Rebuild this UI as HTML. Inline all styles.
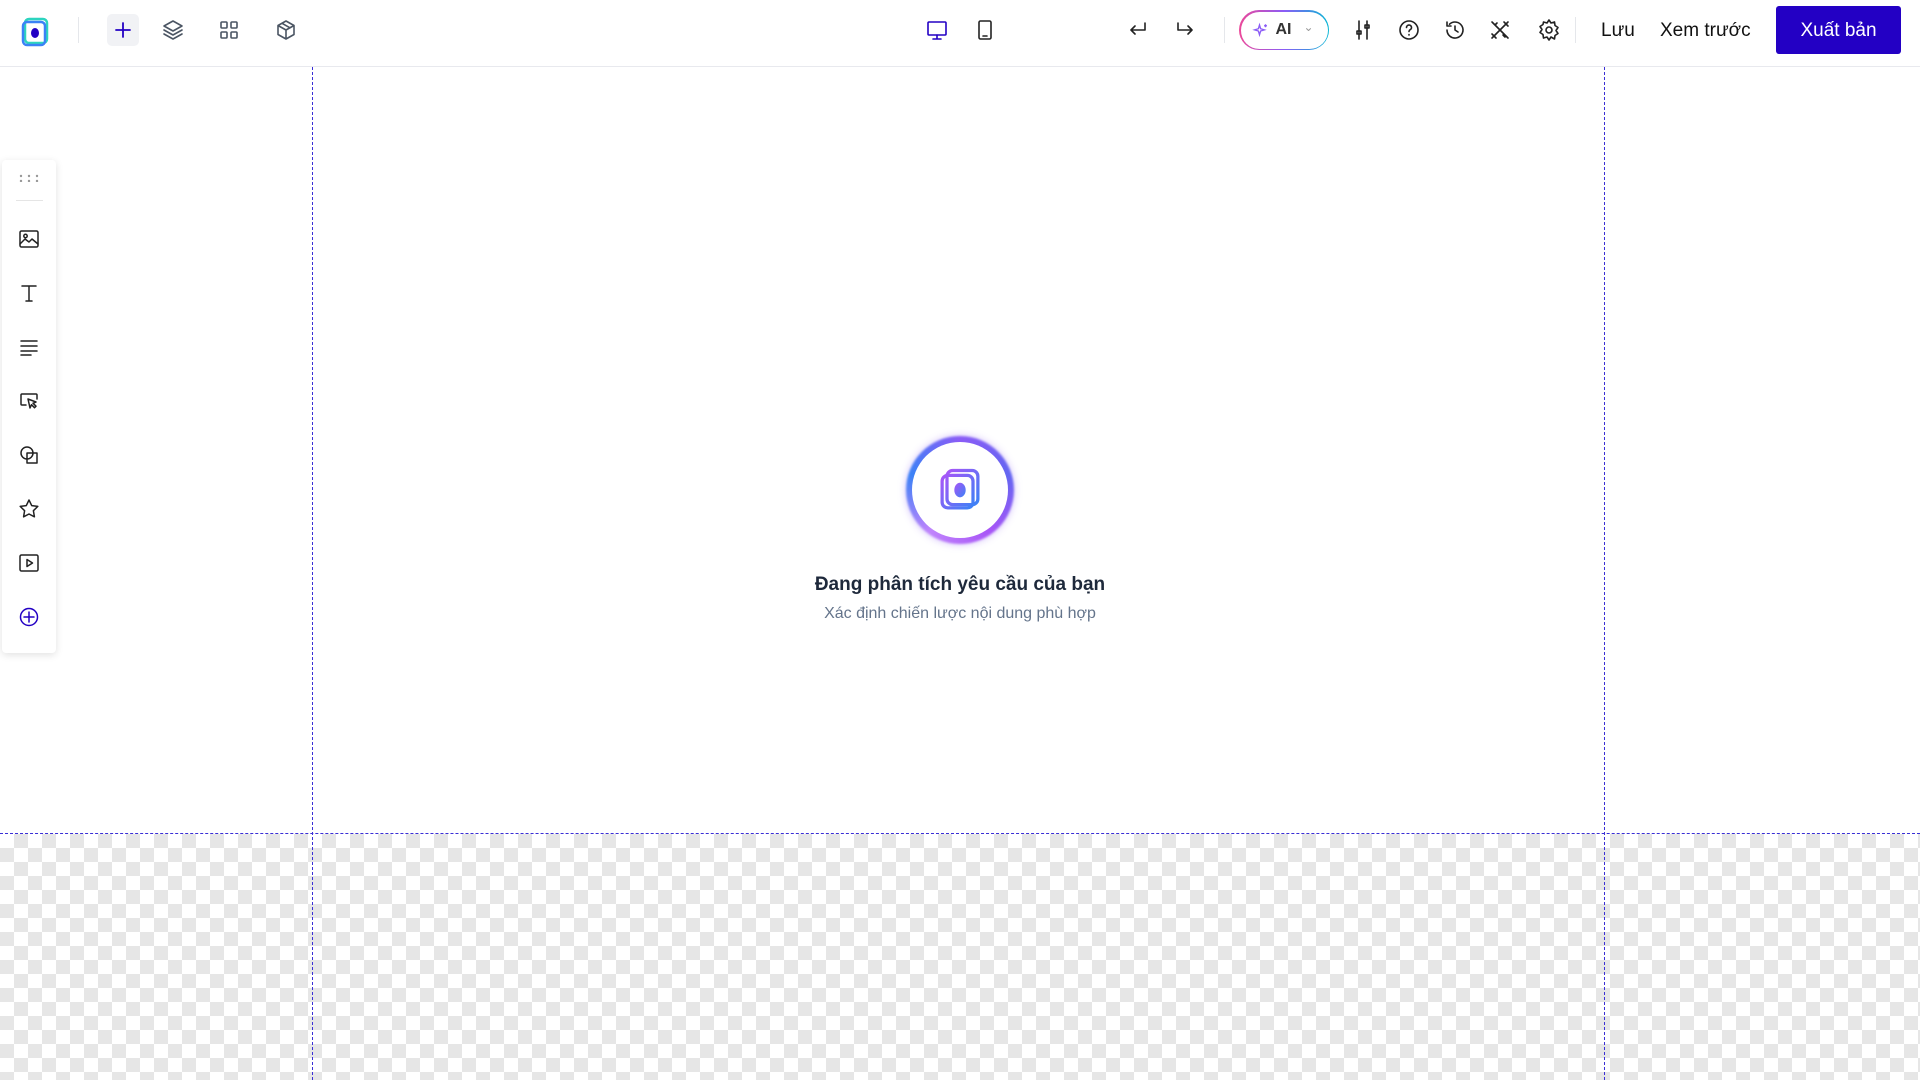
<!DOCTYPE html>
<html><head><meta charset="utf-8"><style>
*{margin:0;padding:0;box-sizing:border-box}
body{width:1920px;height:1080px;overflow:hidden;background:#fff;font-family:"Liberation Sans",sans-serif;position:relative}
.top{position:absolute;left:0;top:0;width:1920px;height:67px;border-bottom:1px solid #e8e9ee;background:#fff;z-index:3}
.ic{position:absolute;top:18px;width:24px;height:24px}
.ic svg{width:24px;height:24px;fill:none;stroke:#4b5563;stroke-width:1.6;stroke-linecap:round;stroke-linejoin:round}
.div{position:absolute;top:17px;width:1px;height:26px;background:#e5e7eb}
.txt{position:absolute;top:20px;font-size:19px;color:#111}
.btn{position:absolute;left:1776px;top:6px;width:125px;height:48px;background:#2300c4;color:#fff;font-size:19px;border-radius:3px;text-align:center;line-height:50px}
.checker{position:absolute;left:0;top:834px;width:1920px;height:246px;background-color:#fff;background-image:linear-gradient(45deg,#e6e6e6 25%,transparent 25%,transparent 75%,#e6e6e6 75%),linear-gradient(45deg,#e6e6e6 25%,transparent 25%,transparent 75%,#e6e6e6 75%);background-size:28px 28px;background-position:0 0,14px 14px}
.vl{position:absolute;top:67px;width:0;height:1013px;border-left:1.5px dashed #3a2fd6;z-index:2}
.hl{position:absolute;left:0;top:833px;width:1920px;border-top:1.5px dashed #3a2fd6;z-index:2}
.side{position:absolute;left:2px;top:160px;width:54px;height:493px;background:#fff;border-radius:4px;box-shadow:0 2px 8px rgba(0,0,0,.12);z-index:4}
.si{position:absolute;left:15px;width:24px;height:24px}
.si svg{width:24px;height:24px;fill:none;stroke:#222;stroke-width:1.5;stroke-linecap:round;stroke-linejoin:round}
</style></head><body>
<div class="top">
 <svg style="position:absolute;left:19px;top:16px" width="32" height="32" viewBox="0 0 32 32"><rect x="6" y="3" width="22" height="24" rx="4" fill="none" stroke="#2dd4bf" stroke-width="2.5"/><rect x="4" y="6" width="22" height="23" rx="4" fill="none" stroke="#3b82f6" stroke-width="2.5"/><ellipse cx="16" cy="17" rx="4" ry="5" fill="#2300c4"/></svg>
 <div class="div" style="left:78px"></div>
 <div style="position:absolute;left:107px;top:14px;width:32px;height:32px;border-radius:5px;background:#f1f2f5"></div>
 <div class="ic" style="left:111px"><svg viewBox="0 0 24 24" style="stroke:#2300c4;stroke-width:1.8"><path d="M12 5v14M5 12h14"/></svg></div>
 <div class="ic" style="left:161px"><svg viewBox="0 0 24 24"><path d="M12 3l9 5-9 5-9-5z M3 12l9 5 9-5 M3 16l9 5 9-5"/></svg></div>
 <div class="ic" style="left:217px"><svg viewBox="0 0 24 24"><rect x="4" y="4" width="6" height="6" rx="1"/><rect x="14" y="4" width="6" height="6" rx="1"/><rect x="4" y="14" width="6" height="6" rx="1"/><rect x="14" y="14" width="6" height="6" rx="1"/></svg></div>
 <div class="ic" style="left:274px"><svg viewBox="0 0 24 24"><path d="M12 3l8 4.5v9L12 21l-8-4.5v-9z M4 7.5l8 4.5 8-4.5 M12 12v9 M8 5.3l8 4.5"/></svg></div>
 <div class="ic" style="left:925px"><svg viewBox="0 0 24 24" style="stroke:#2300c4"><rect x="3" y="4" width="18" height="13" rx="1"/><path d="M12 17v4M8 21h8"/></svg></div>
 <div class="ic" style="left:973px"><svg viewBox="0 0 24 24" style="stroke:#222"><rect x="6" y="3" width="12" height="18" rx="1.5"/><path d="M10 18h4"/></svg></div>
 <div class="ic" style="left:1126px"><svg viewBox="0 0 24 24" style="stroke:#222"><path d="M19 5v7H6 M9 8l-4 4 4 4"/></svg></div>
 <div class="ic" style="left:1173px"><svg viewBox="0 0 24 24" style="stroke:#222"><path d="M5 5v7h13 M15 8l4 4-4 4"/></svg></div>
 <div class="div" style="left:1224px"></div>
 <div style="position:absolute;left:1239px;top:10px;width:90px;height:40px;border-radius:20px;padding:1.5px;background:linear-gradient(90deg,#ec4899,#8b5cf6,#06b6d4)"><div style="width:100%;height:100%;border-radius:19px;background:#fff;position:relative">
  <svg style="position:absolute;left:11px;top:10px" width="18" height="18" viewBox="0 0 24 24" fill="none" stroke="#8b5cf6" stroke-width="1.8"><path d="M10 4l1.5 5 5 1.5-5 1.5L10 17l-1.5-5-5-1.5 5-1.5z M18 3v4M16 5h4"/></svg>
  <span style="position:absolute;left:35px;top:9px;font-size:16px;font-weight:bold;color:#333">AI</span>
  <span style="position:absolute;left:63px;top:8px;font-size:12px;color:#999">&#8964;</span></div></div>
 <div class="ic" style="left:1351px"><svg viewBox="0 0 24 24" style="stroke:#222"><path d="M8 3v18M16 3v18"/><rect x="6" y="13" width="4" height="3"/><rect x="14" y="7" width="4" height="3"/></svg></div>
 <div class="ic" style="left:1397px"><svg viewBox="0 0 24 24" style="stroke:#222"><circle cx="12" cy="12" r="9"/><path d="M9.5 9.5a2.5 2.5 0 1 1 3.5 2.3c-.7.4-1 1-1 1.7M12 16.5v.5"/></svg></div>
 <div class="ic" style="left:1443px"><svg viewBox="0 0 24 24" style="stroke:#222"><path d="M4 12a8 8 0 1 0 2.5-5.8M4 4v4h4M12 8v4l3 2"/></svg></div>
 <div class="ic" style="left:1488px"><svg viewBox="0 0 24 24" style="stroke:#222"><path d="M4 4l16 16M20 4L4 20M16 4l4 4M4 16l4 4M7 7l2-2M15 17l2 2"/></svg></div>
 <div class="ic" style="left:1537px"><svg viewBox="0 0 24 24" style="stroke:#222"><circle cx="12" cy="12" r="3"/><path d="M12 2l2 3 3.5-1 .5 3.5 3 2-2 3 2 3-3 2-.5 3.5L14 19l-2 3-2-3-3.5 1L6 16.5l-3-2 2-3-2-3 3-2L6.5 4 10 5z"/></svg></div>
 <div class="div" style="left:1575px"></div>
 <div class="txt" style="left:1601px">Lưu</div>
 <div class="txt" style="left:1660px">Xem trước</div>
 <div class="btn">Xuất bản</div>
</div>
<div class="checker"></div>
<div class="vl" style="left:312px"></div>
<div class="vl" style="left:1604px"></div>
<div class="hl"></div>
<div class="side">
 <svg style="position:absolute;left:17px;top:14px" width="20" height="8"><g fill="#999"><circle cx="2" cy="2" r="1.2"/><circle cx="10" cy="2" r="1.2"/><circle cx="18" cy="2" r="1.2"/><circle cx="2" cy="7" r="1.2"/><circle cx="10" cy="7" r="1.2"/><circle cx="18" cy="7" r="1.2"/></g></svg>
 <div style="position:absolute;left:14px;top:40px;width:27px;height:1px;background:#e5e5e5"></div>
 <div class="si" style="top:67px"><svg viewBox="0 0 24 24"><rect x="3" y="4" width="18" height="16" rx="1.5"/><circle cx="8.5" cy="9" r="1.7"/><path d="M3 17l5-5 4 3 3-3 6 5"/></svg></div>
 <div class="si" style="top:121px"><svg viewBox="0 0 24 24"><path d="M5 5h14M12 5v15M9 20h6"/></svg></div>
 <div class="si" style="top:175px"><svg viewBox="0 0 24 24"><path d="M4 6h16M4 11h16M4 16h16M4 20h10"/></svg></div>
 <div class="si" style="top:229px"><svg viewBox="0 0 24 24"><path d="M9 16H5a1 1 0 0 1-1-1V6a1 1 0 0 1 1-1h14a1 1 0 0 1 1 1v4"/><path d="M11 10l8 3-3 1.2 3 3-1.5 1.5-3-3L13 19z"/></svg></div>
 <div class="si" style="top:283px"><svg viewBox="0 0 24 24"><circle cx="10" cy="10" r="6"/><rect x="10" y="10" width="10" height="10"/></svg></div>
 <div class="si" style="top:337px"><svg viewBox="0 0 24 24"><path d="M12 3l2.7 5.6 6.1.8-4.4 4.3 1 6.1L12 17l-5.4 2.8 1-6.1L3.2 9.4l6.1-.8z"/></svg></div>
 <div class="si" style="top:391px"><svg viewBox="0 0 24 24"><rect x="3" y="4" width="18" height="16" rx="1.5"/><path d="M10 8.5v7l5.5-3.5z"/></svg></div>
 <div class="si" style="top:445px"><svg viewBox="0 0 24 24" style="stroke:#2300c4"><circle cx="12" cy="12" r="8.5"/><path d="M12 7v10M7 12h10"/></svg></div>
</div>
<div style="position:absolute;left:906px;top:436px;width:108px;height:108px;border-radius:50%;background:conic-gradient(#8b5cf6,#6366f1,#a855f7,#c084fc,#3b82f6,#8b5cf6);filter:blur(1px);box-shadow:0 0 8px rgba(139,92,246,.4)"></div>
<div style="position:absolute;left:912px;top:442px;width:96px;height:96px;border-radius:50%;background:#fff"></div>
<svg style="position:absolute;left:934px;top:464px" width="52" height="52" viewBox="0 0 32 32"><defs><linearGradient id="g" x1="0" y1="0" x2="1" y2="1"><stop offset="0" stop-color="#a855f7"/><stop offset="1" stop-color="#3b82f6"/></linearGradient></defs><rect x="8" y="4" width="19" height="21" rx="3.5" fill="none" stroke="url(#g)" stroke-width="2"/><rect x="5" y="7" width="19" height="20" rx="3.5" fill="none" stroke="url(#g)" stroke-width="2"/><ellipse cx="16" cy="16" rx="3.5" ry="4.5" fill="url(#g)"/></svg>
<div style="position:absolute;left:0;width:1920px;top:574px;text-align:center;font-size:19px;font-weight:bold;color:#1e293b">Đang phân tích yêu cầu của bạn</div>
<div style="position:absolute;left:0;width:1920px;top:605px;text-align:center;font-size:16px;color:#64748b">Xác định chiến lược nội dung phù hợp</div>
</body></html>
